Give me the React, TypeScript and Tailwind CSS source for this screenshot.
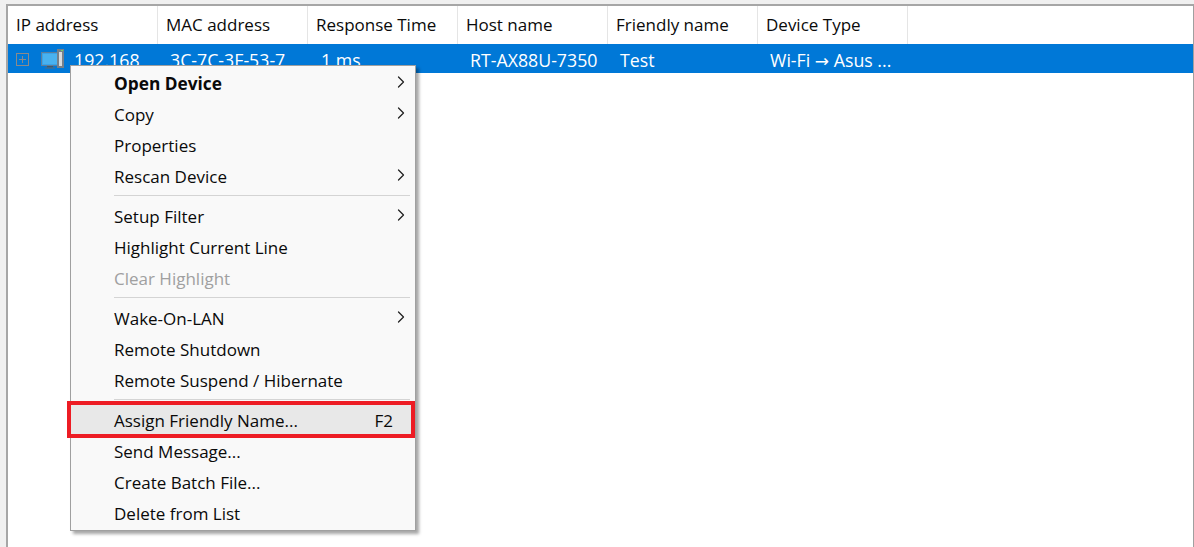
import React from 'react';
import { ChevronRight } from 'lucide-react';

const columns = ['IP address', 'MAC address', 'Response Time', 'Host name', 'Friendly name', 'Device Type'];

type MenuRow = { label?: string; bold?: boolean; sub?: boolean; disabled?: boolean; hot?: boolean; keys?: string; sep?: boolean };

const menu: MenuRow[] = [
    { label: 'Open Device', bold: true, sub: true },
    { label: 'Copy', sub: true },
    { label: 'Properties' },
    { label: 'Rescan Device', sub: true },
    { sep: true },
    { label: 'Setup Filter', sub: true },
    { label: 'Highlight Current Line' },
    { label: 'Clear Highlight', disabled: true },
    { sep: true },
    { label: 'Wake-On-LAN', sub: true },
    { label: 'Remote Shutdown' },
    { label: 'Remote Suspend / Hibernate' },
    { sep: true },
    { label: 'Assign Friendly Name...', hot: true, keys: 'F2' },
    { label: 'Send Message...' },
    { label: 'Create Batch File...' },
    { label: 'Delete from List' },
];

const DeviceIcon = () => (
    <svg width="24" height="20" viewBox="0 0 24 20" className="shrink-0">
        <rect x="0.5" y="3.5" width="17" height="13" fill="#3aa3e8" stroke="#5d7f9c" />
        <rect x="2" y="5" width="14" height="10" fill="#49b2f0" />
        <rect x="6" y="17" width="6" height="1.5" fill="#44586a" />
        <rect x="4" y="18.5" width="10" height="1" fill="#5b6b78" />
        <rect x="16" y="0" width="7" height="19" fill="#76808a" />
        <rect x="18" y="3" width="3" height="14" fill="#d5dade" />
        <rect x="20" y="1" width="2" height="1" fill="#6fd06a" />
    </svg>
);

const ExpandBox = () => (
    <svg width="13" height="13" viewBox="0 0 13 13" className="shrink-0">
        <rect x="0.5" y="0.5" width="12" height="12" fill="none" stroke="#8a8a8a" />
        <path d="M3 6.5h7M6.5 3v7" stroke="#8a8a8a" />
    </svg>
);

export default function App() {
    return (
        <div className="relative w-[1194px] h-[547px] overflow-hidden bg-[#f0f0f0] pt-1 pl-1.5 text-[17px] text-[#0a0a0a]" style={{ fontFamily: '"Open Sans", "Noto Sans", sans-serif' }}>
            <div className="h-full bg-white border-t-2 border-l-2 border-r border-[#a0a0a0] border-t-[#a6a6a6] border-l-[#a6a6a6]">
                <div className="flex h-[38px]">
                    {columns.map((c) => (
                        <div key={c} className="w-[150px] pl-2 flex items-center border-r border-[#e5e5e5] whitespace-nowrap">
                            {c}
                        </div>
                    ))}
                </div>
                <div className="flex items-center h-[29px] pt-1 bg-[#0078d7] text-white text-[17.75px] whitespace-nowrap">
                    <div className="w-[150px] flex items-center pl-2">
                        <div className="-mt-[3px]">
                            <ExpandBox />
                        </div>
                        <div className="ml-3 -mt-[4px]">
                            <DeviceIcon />
                        </div>
                        <span className="ml-[9px]">192.168</span>
                    </div>
                    <div className="w-[150px] pl-3">3C-7C-3F-53-7</div>
                    <div className="w-[150px] pl-[13px]">1 ms</div>
                    <div className="w-[150px] pl-3">RT-AX88U-7350</div>
                    <div className="w-[150px] pl-3">Test</div>
                    <div className="w-[150px] pl-3">
                        Wi-Fi <span className="text-[17px]" style={{ fontFamily: '"DejaVu Sans", sans-serif' }}>→</span> Asus ...
                    </div>
                </div>
            </div>

            {/* popup menu */}
            <div className="absolute left-[70px] top-[65px] w-[346px] h-[466px] py-px bg-[#f9f9f9] border border-[#a0a0a0] shadow-[3px_3px_3px_rgba(0,0,0,0.35)]">
                {menu.map((m, i) =>
                    m.sep ? (
                        <div key={i} className="h-[9px] ml-[43px] mr-[5px] flex items-center">
                            <div className="w-full h-px bg-[#d4d4d4]" />
                        </div>
                    ) : (
                        <div key={i} className={`h-[31px] pt-0.5 pl-[43px] pr-[22px] flex items-center justify-between whitespace-nowrap ${m.hot ? 'bg-[#e8e8e8]' : ''} ${m.disabled ? 'text-[#a0a0a0]' : ''} ${m.bold ? 'font-bold text-[17.3px]' : ''}`}>
                            <span>{m.label}</span>
                            {m.keys && <span>{m.keys}</span>}
                            {m.sub && <ChevronRight size={20} strokeWidth={1.5} className="text-[#222] -mr-[18px] -mt-[3px]" />}
                        </div>
                    )
                )}
            </div>

            {/* red annotation round the menu item */}
            <div className="absolute left-[67px] top-[401px] w-[348px] h-[37px] border-4 border-[#ed1c24]" />
        </div>
    );
}
